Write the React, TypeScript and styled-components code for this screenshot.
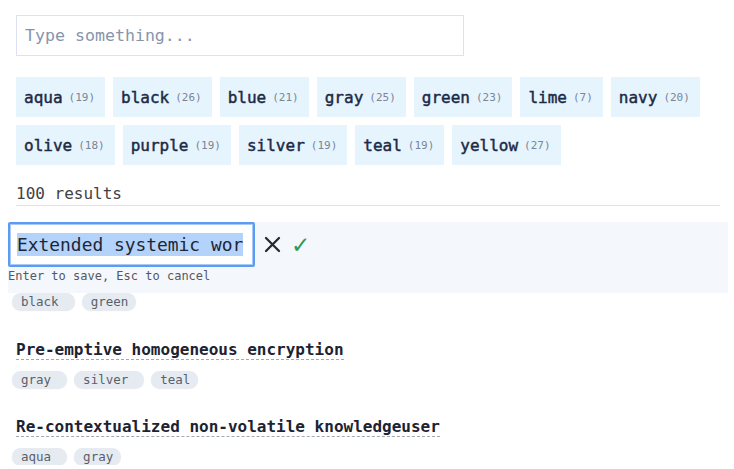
import React from "react";
import styled, { createGlobalStyle } from "styled-components";

const Global = createGlobalStyle`
  html, body { margin: 0; padding: 0; background: #fff; }
  body { font-family: "DejaVu Sans Mono", "Liberation Mono", monospace; color: #1f2535; }
  * { box-sizing: border-box; }
`;

const Page = styled.div`
  width: 734px;
  padding: 15px 14px 0 16px;
`;

const Search = styled.input`
  display: block;
  width: 448px;
  height: 41px;
  border: 1px solid #dde3ee;
  padding: 0 8px;
  font-family: inherit;
  font-size: 16.6px;
  color: #1f2535;
  outline: none;
  &::placeholder { color: #8795ab; }
`;

const Cloud = styled.div`
  display: flex;
  flex-wrap: wrap;
  gap: 8px;
  margin-top: 21px;
`;

const TagButton = styled.button`
  display: flex;
  align-items: center;
  height: 40px;
  padding: 0 10px 0 8px;
  border: none;
  background: #e6f4fe;
  font-family: inherit;
  cursor: pointer;
`;

const TagLabel = styled.span`
  font-size: 16px;
  font-weight: 400;
  -webkit-text-stroke: 0.45px #1c2a45;
  color: #1c2a45;
`;

const TagCount = styled.span`
  margin-left: 6px;
  font-size: 11px;
  color: #7b8596;
`;

const Results = styled.div`
  margin-top: 19px;
  font-size: 16px;
  line-height: 20px;
  padding-bottom: 1px;
  color: #3f4145;
  border-bottom: 1px solid #dde1ea;
`;

const List = styled.div`
  margin: 16px -8px 0;
  display: flex;
  flex-direction: column;
  gap: 30px;
`;

const Item = styled.div`
  display: flex;
  flex-direction: column;
`;

const EditArea = styled.div`
  background: #f4f7fb;
  padding-bottom: 9px;
`;

const EditRow = styled.div`
  display: flex;
  align-items: center;
`;

const EditBox = styled.div`
  width: 247px;
  height: 45px;
  border: 2px solid #5c9bf3;
  box-shadow: inset 0 0 0 1px #a9c9f7;
  border-radius: 2px;
  background: #fff;
  display: flex;
  align-items: center;
  padding-left: 7px;
  overflow: hidden;
  white-space: pre;
  font-size: 17.9px;
`;

const Selected = styled.span`
  background: #b3d3fa;
  color: #1f2535;
  line-height: 23px;
`;

const IconButton = styled.button<{ $color: string; $left: number }>`
  border: none;
  background: none;
  padding: 0;
  margin-left: ${(p) => p.$left}px;
  color: ${(p) => p.$color};
  display: flex;
  align-items: center;
  cursor: pointer;
`;

const Check = styled.span`
  font-family: "DejaVu Sans", sans-serif;
  font-size: 23px;
  line-height: 24px;
`;

const Hint = styled.div`
  margin-top: 2px;
  font-size: 12px;
  line-height: 15px;
  color: #55585e;
`;

const Title = styled.div<{ $top: number }>`
  align-self: flex-start;
  margin-left: 8px;
  margin-top: ${(p) => p.$top}px;
  font-size: 16px;
  font-weight: 700;
  line-height: 18px;
  color: #1d2331;
  border-bottom: 1px dashed #a3a9b3;
`;

const Pills = styled.div<{ $top: number }>`
  display: flex;
  gap: 7px;
  padding-left: 4px;
  margin-top: ${(p) => p.$top}px;
`;

const Pill = styled.span<{ $last: boolean }>`
  height: 17px;
  line-height: 17px;
  font-size: 12.5px;
  padding: 0 ${(p) => (p.$last ? 8 : 16)}px 0 9px;
  border-radius: 9px;
  background: #e6ebf2;
  color: #5a606a;
  box-shadow: 0 1px 1px rgba(40, 60, 90, 0.12);
`;

const tags: [string, number][] = [
  ["aqua", 19], ["black", 26], ["blue", 21], ["gray", 25], ["green", 23], ["lime", 7], ["navy", 20],
  ["olive", 18], ["purple", 19], ["silver", 19], ["teal", 19], ["yellow", 27],
];

const items = [
  { title: "Pre-emptive homogeneous encryption", tags: ["gray", "silver", "teal"], top: 1 },
  { title: "Re-contextualized non-volatile knowledgeuser", tags: ["aqua", "gray"], top: 0 },
];

const PillRow = ({ list, top }: { list: string[]; top: number }) => (
  <Pills $top={top}>
    {list.map((t, i) => (
      <Pill key={t} $last={i === list.length - 1}>{t}</Pill>
    ))}
  </Pills>
);

export default function App() {
  return (
    <Page>
      <Global />
      <Search placeholder="Type something..." />
      <Cloud>
        {tags.map(([n, c]) => (
          <TagButton key={n}>
            <TagLabel>{n}</TagLabel>
            <TagCount>({c})</TagCount>
          </TagButton>
        ))}
      </Cloud>
      <Results>100 results</Results>
      <List>
        <Item>
          <EditArea>
            <EditRow>
              <EditBox><Selected>Extended systemic wor</Selected></EditBox>
              <IconButton $color="#272b33" $left={9} aria-label="cancel">
                <svg width="17" height="17" viewBox="0 0 17 17">
                  <path d="M2 2 L15 15 M15 2 L2 15" stroke="currentColor" strokeWidth="2.3" strokeLinecap="round" />
                </svg>
              </IconButton>
              <IconButton $color="#2e9a58" $left={10} aria-label="save">
                <Check>✓</Check>
              </IconButton>
            </EditRow>
            <Hint>Enter to save, Esc to cancel</Hint>
          </EditArea>
          <PillRow list={["black", "green"]} top={0} />
        </Item>
        {items.map((it) => (
          <Item key={it.title}>
            <Title $top={it.top}>{it.title}</Title>
            <PillRow list={it.tags} top={11} />
          </Item>
        ))}
      </List>
    </Page>
  );
}
